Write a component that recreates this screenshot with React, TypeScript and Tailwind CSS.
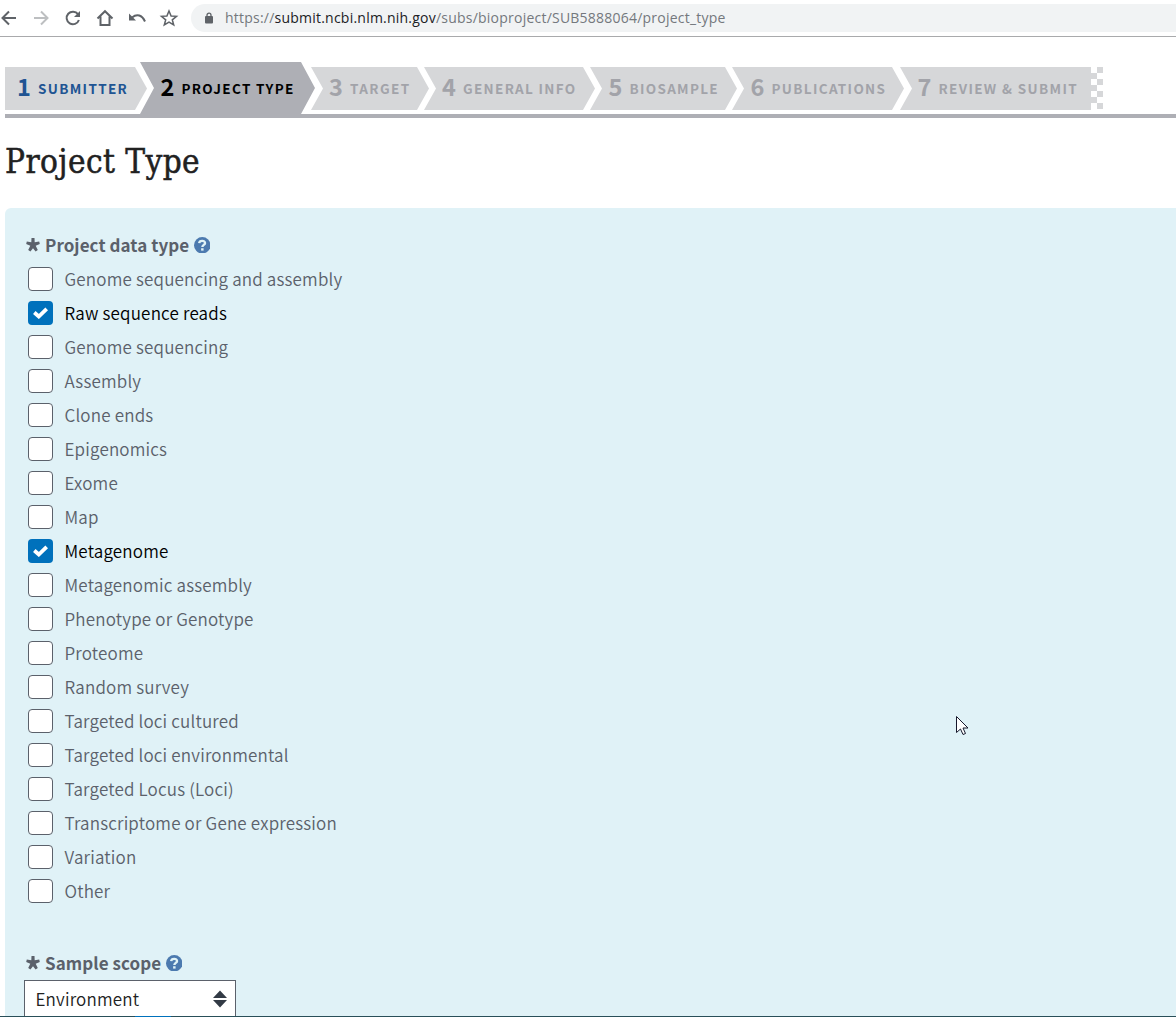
const sans = "font-['Noto_Sans_CJK_SC','Noto_Sans',sans-serif]";

type Step = { n: number; label: string; box: string; pad: string; tracking: string };

const steps: Step[] = [
  { n: 1, label: "SUBMITTER", box: "w-[142px] h-[43px] bg-[#d6d7d9] text-[#205493] [clip-path:polygon(0_0,130px_0,100%_50%,130px_100%,0_100%)]", pad: "pl-[12px]", tracking: "tracking-[1.340px]" },
  { n: 2, label: "PROJECT TYPE", box: "-ml-[7px] w-[175px] h-[52px] bg-[#aeafb5] text-black [clip-path:polygon(0_0,161px_0,100%_50%,161px_100%,0_100%,14px_50%)]", pad: "pl-[20.5px]", tracking: "tracking-[1.330px]" },
  { n: 3, label: "TARGET", box: "-ml-[4px] w-[118px] h-[43px] bg-[#d6d7d9] text-[#a2a3a9] [clip-path:polygon(0_0,106px_0,100%_50%,106px_100%,0_100%,12px_50%)]", pad: "pl-[18px]", tracking: "tracking-[1.400px]" },
  { n: 4, label: "GENERAL INFO", box: "-ml-[5px] w-[171px] h-[43px] bg-[#d6d7d9] text-[#a2a3a9] [clip-path:polygon(0_0,159px_0,100%_50%,159px_100%,0_100%,12px_50%)]", pad: "pl-[18px]", tracking: "tracking-[1.320px]" },
  { n: 5, label: "BIOSAMPLE", box: "-ml-[5px] w-[147px] h-[43px] bg-[#d6d7d9] text-[#a2a3a9] [clip-path:polygon(0_0,135px_0,100%_50%,135px_100%,0_100%,12px_50%)]", pad: "pl-[18.5px]", tracking: "tracking-[1.300px]" },
  { n: 6, label: "PUBLICATIONS", box: "-ml-[5px] w-[172px] h-[43px] bg-[#d6d7d9] text-[#a2a3a9] [clip-path:polygon(0_0,160px_0,100%_50%,160px_100%,0_100%,12px_50%)]", pad: "pl-[18.5px]", tracking: "tracking-[1.330px]" },
  { n: 7, label: "REVIEW & SUBMIT", box: "-ml-[4px] w-[191px] h-[43px] bg-[#d6d7d9] text-[#a2a3a9] [clip-path:polygon(0_0,100%_0,100%_100%,0_100%,12px_50%)]", pad: "pl-[17.5px]", tracking: "tracking-[1.350px]" },
];

const dataTypes = [
  "Genome sequencing and assembly", "Raw sequence reads", "Genome sequencing", "Assembly",
  "Clone ends", "Epigenomics", "Exome", "Map", "Metagenome", "Metagenomic assembly",
  "Phenotype or Genotype", "Proteome", "Random survey", "Targeted loci cultured",
  "Targeted loci environmental", "Targeted Locus (Loci)", "Transcriptome or Gene expression",
  "Variation", "Other",
];
const selected = new Set(["Raw sequence reads", "Metagenome"]);

function BrowserBar() {
  return (
    <div className="flex h-[37px] shrink-0 items-center border-b border-[#a9aaac] bg-white">
      <svg className="h-[36px] w-[191px] shrink-0" viewBox="0 0 191 36" fill="none" stroke="#5f6368" strokeWidth="2">
        <path d="M16 18H3M9 11.5L2.500 18L9 24.500" />
        <path d="M34 18H47M41 11.500L47.500 18L41 24.500" stroke="#bdbfc1" />
        <path d="M78 14.200A6.300 6.300 0 1 0 78.900 20" />
        <path d="M80 11V17H74Z" fill="#5f6368" stroke="none" />
        <path d="M97.500 18.500L105 11.200L112.500 18.500M100.500 16.500V25H109.500V16.500" />
        <path d="M132 17.500C137 13.500 142 15 145 21.500" />
        <path d="M129 13.500V20.500H136Z" fill="#5f6368" stroke="none" />
        <path d="M169 11L171.100 16L176.500 16.300L172.300 19.800L173.700 25L169 22.200L164.300 25L165.700 19.800L161.500 16.300L166.900 16Z" strokeWidth="1.500" />
      </svg>
      <div className="flex h-7 flex-1 items-center rounded-l-full bg-[#f1f3f4] pl-[14px]">
        <svg className="mr-[12px] h-3 w-2 shrink-0" viewBox="0 0 8 12" fill="none">
          <rect y="4" width="8" height="7.500" rx="1" fill="#5f6368" />
          <path d="M2 5V3.200a2 2 0 0 1 4 0V5" stroke="#5f6368" strokeWidth="1.300" />
        </svg>
        <span className="mb-[2px] whitespace-nowrap font-['Open_Sans','Noto_Sans',sans-serif] text-[14px] tracking-[0.225px] text-[#74787d]">
          https://<span className="text-[#202124]">submit.ncbi.nlm.nih.gov</span>/subs/bioproject/SUB5888064/project_type
        </span>
      </div>
    </div>
  );
}

function FieldTitle({ children }: { children: string }) {
  return (
    <div className="flex h-6 items-center text-[#5b616b]">
      <svg className="mr-[5px] h-[14px] w-[14px]" viewBox="0 0 14 14" fill="#5b616b">
        <path d="M5.500 0H8.500L8.700 4.300L13.200 3.400L13.800 6L9.700 7.700L11.800 11.900L9.600 13.500L7 10.200L4.400 13.500L2.200 11.900L4.300 7.700L.2 6L.8 3.400L5.300 4.300Z" />
      </svg>
      <span className="whitespace-nowrap text-[17px] leading-6 font-bold tracking-[0.060px]">{children}</span>
      <svg className="ml-[4.500px] h-[16.500px] w-[16.500px]" viewBox="0 0 16 16" fill="none">
        <circle cx="8" cy="8" r="8" fill="#4c7aaf" />
        <path d="M5 6C5.300 3 10.800 3 10.700 5.900C10.600 7.800 8.100 7.600 8.100 9.800" stroke="#e0f3f7" strokeWidth="2.300" />
        <path d="M6.900 10.900H9.300V13.200H6.900Z" fill="#e0f3f7" />
      </svg>
    </div>
  );
}

export default function App() {
  return (
    <div className={`relative flex h-[1017px] w-[1176px] flex-col overflow-hidden bg-white ${sans}`}>
      <BrowserBar />
      <nav className="mt-[25px] ml-[5px] flex h-14 shrink-0 border-b-4 border-[#aeafb5]">
        {steps.map((s) => (
          <div key={s.n} className={`flex shrink-0 items-center font-bold whitespace-nowrap ${s.n === 2 ? "" : "mt-[5px]"} ${s.box} ${s.pad}`}>
            <span className={`w-[21px] text-[23.500px] leading-8 ${s.n === 2 ? "mb-[4px]" : "mb-[5px]"}`}>{s.n}</span>
            <span className={`mb-[1px] text-[13.500px] leading-5 ${s.tracking}`}>{s.label}</span>
          </div>
        ))}
        <div className="mt-[5px] grid h-[42px] w-3 grid-cols-2 grid-rows-7">
          {Array.from({ length: 14 }, (_, i) => (
            <span key={i} className={(Math.floor(i / 2) + i) % 2 ? "bg-[#d6d7d9]" : "bg-white"} />
          ))}
        </div>
      </nav>
      <h1 className="mt-[20px] ml-[5px] h-[48px] shrink-0 font-['DejaVu_Serif_Condensed','DejaVu_Serif',serif] text-[33px] leading-[48px] tracking-[0.430px] whitespace-nowrap text-[#212121] [-webkit-text-stroke:0.500px_#212121]">
        Project Type
      </h1>
      <main className="mt-[22px] ml-[5px] flex flex-1 flex-col rounded-tl-[6px] bg-[#e0f2f7] pt-[25px] pl-[21px]">
        <FieldTitle>Project data type</FieldTitle>
        <div className="mt-[5px] ml-[2px] flex flex-col">
          {dataTypes.map((t) => (
            <label key={t} className={`flex h-[34px] items-center ${selected.has(t) ? "text-black" : "text-[#5b616b]"}`}>
              <span className={`mr-[11.500px] flex h-6 w-[25px] items-center justify-center rounded-[4px] ${selected.has(t) ? "bg-[#0071bc]" : "border border-[#5b616b] bg-white"}`}>
                {selected.has(t) && (
                  <svg className="h-3 w-[15px]" viewBox="0 0 15 12" fill="none" stroke="white" strokeWidth="3.800">
                    <path d="M1.300 5.500L5.800 9.500L13.700 1.800" />
                  </svg>
                )}
              </span>
              <span className="text-[17px] leading-6 font-[350] tracking-[0.175px] whitespace-nowrap">{t}</span>
            </label>
          ))}
        </div>
        <div className="mt-[43px]"><FieldTitle>Sample scope</FieldTitle></div>
        <div className="mt-[5px] -ml-[2px] flex h-[44px] w-[212px] shrink-0 items-start justify-between border border-[#5b616b] bg-white pt-[6px] pr-[8px] pl-[10.500px]">
          <span className="text-[17px] leading-6 font-[350] tracking-[0.175px] text-[#212121]">Environment</span>
          <svg className="mt-[3px] h-[18px] w-[14px]" viewBox="0 0 14 18" fill="#323a45">
            <path d="M0 8L7 0.500L14 8ZM0 10H14L7 17.500Z" />
          </svg>
        </div>
      </main>
      <div className="absolute bottom-0 left-0 h-px w-full bg-[#294f59]">
        <div className="ml-[135px] h-px w-[36px] bg-[#0071bc]" />
      </div>
      <svg className="absolute top-[715px] left-[956px] h-[21px] w-[13px]" viewBox="0 0 13 21" fill="white" stroke="#17182c">
        <path d="M.5 1.500V17.500L4.500 14L7 19.500L9.500 18.500L7 13H12Z" />
      </svg>
    </div>
  );
}
